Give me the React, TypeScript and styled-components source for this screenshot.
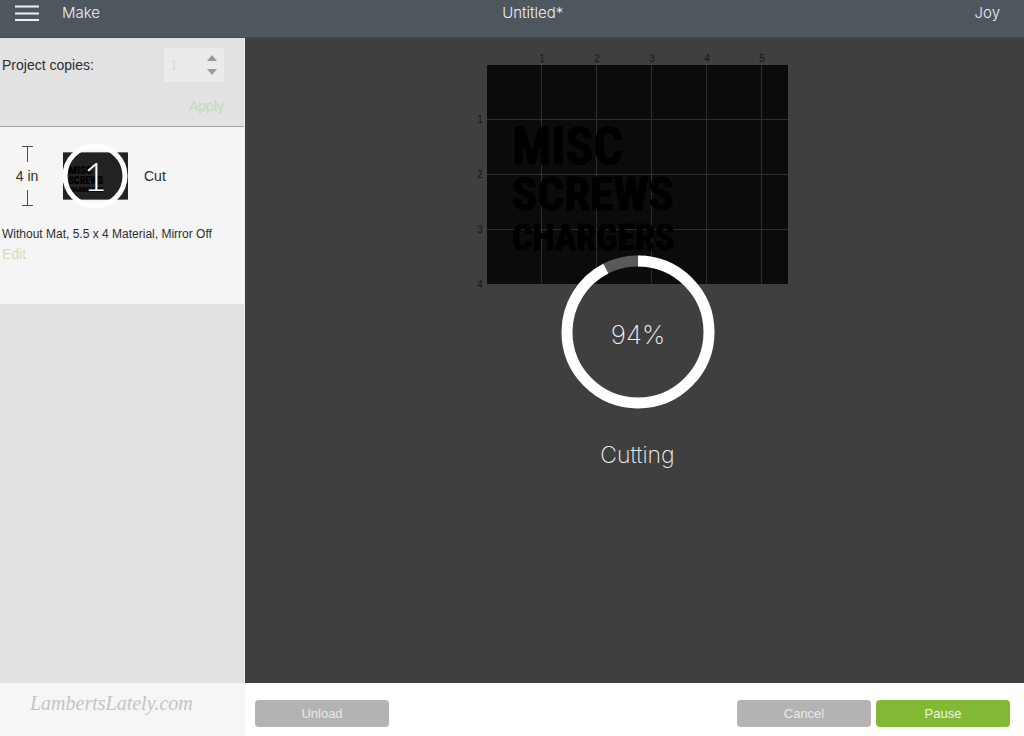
import React from "react";
import styled, { createGlobalStyle } from "styled-components";

const light = `"Inter", "Roboto", sans-serif`;
const regular = `"Liberation Sans", Arial, sans-serif`;

const GlobalStyle = createGlobalStyle`
  * { box-sizing: border-box; }
  body {
    margin: 0;
    background: #ffffff;
    color: #2d2d2d;
    font-family: ${regular};
    font-size: 14px;
    line-height: 20px;
  }
  button, input { font: inherit; }
`;

const Page = styled.div`
  display: grid;
  grid-template-rows: auto 1fr;
  min-height: 100vh;
`;

const Header = styled.header`
  display: grid;
  grid-template-columns: 76px 1fr auto;
  align-items: start;
  height: 38px;
  padding: 3px 24px 0 15px;
  background: #4e565e;
  border-bottom: 1px solid #454b51;
  color: #eef1f3;
  font-family: ${light};
  font-size: 15px;
  font-weight: 300;
  line-height: 20px;
`;

const HeaderLeft = styled.div`
  display: flex;
  gap: 23px;
`;

const MenuButton = styled.button`
  display: flex;
  padding: 2px 0 0;
  border: 0;
  background: none;
  color: inherit;
`;

const Title = styled.h1`
  margin: 0;
  font: inherit;
  text-align: center;
`;

const Body = styled.div`
  display: grid;
  grid-template-columns: 245px 1fr;
  grid-template-rows: 1fr auto;
`;

const Sidebar = styled.aside`
  background: #e2e2e2;
  border-right: 1px solid #f0f0f0;
`;

const Copies = styled.form`
  display: grid;
  grid-template-rows: auto 1fr;
  gap: 14px;
  height: 89px;
  padding: 10px 20px 0 2px;
  border-bottom: 1px solid #a2a2a2;
`;

const CopiesRow = styled.div`
  display: flex;
  align-items: center;
  justify-content: space-between;
  height: 34px;
`;

const Stepper = styled.div`
  display: flex;
  width: 60px;
  height: 34px;
  background: #ebebeb;
`;

const CopiesInput = styled.input`
  width: 36px;
  padding: 0 0 0 6px;
  border: 0;
  background: transparent;
  color: #d9d9d9;
  appearance: textfield;
  &::-webkit-inner-spin-button { appearance: none; }
`;

const Steps = styled.div`
  display: flex;
  flex: 1;
  flex-direction: column;
  align-items: center;
  justify-content: center;
  gap: 8px;
`;

const Step = styled.button`
  display: flex;
  padding: 0;
  border: 0;
  background: none;
`;

const TextButton = styled.button`
  justify-self: end;
  align-self: start;
  padding: 0;
  border: 0;
  background: none;
  color: #c6dbb0;
  line-height: 20px;
`;

const MatCard = styled.section`
  height: 177px;
  padding: 15px 2px 0;
  background: #f5f5f5;
`;

const MatRow = styled.div`
  display: grid;
  grid-template-columns: 50px 74px auto;
  column-gap: 9px;
  align-items: center;
  height: 68px;
`;

const Size = styled.div`
  display: grid;
  justify-items: center;
  gap: 4px;
`;

const Thumb = styled.svg`
  display: block;
`;

const Details = styled.p`
  margin: 14px 0 0;
  font-size: 12px;
  line-height: 20px;
  white-space: nowrap;
`;

const EditLink = styled.a`
  color: #cfe0ba;
  text-decoration: none;
`;

const Stage = styled.main`
  position: relative;
  display: flex;
  flex-direction: column;
  align-items: center;
  min-height: 500px;
  padding: 12px 6px 0 0;
  background: #3f3f3f;
`;

const Overlay = styled.div`
  position: absolute;
  inset: 0;
  display: flex;
  flex-direction: column;
  align-items: center;
  justify-content: center;
  gap: 31px;
  padding: 3px 0 0 6px;
  color: #f2f2f2;
  font-family: ${light};
  font-size: 23px;
  font-weight: 200;
  line-height: 30px;
`;

const Brand = styled.div`
  padding: 5px 0 0 30px;
  background: #f6f6f6;
  color: #c4c4c4;
  font-family: "Liberation Serif", serif;
  font-size: 20px;
  font-style: italic;
  line-height: 30px;
`;

const Footer = styled.footer`
  display: flex;
  gap: 5px;
  padding: 17px 14px 9px 10px;
  background: #ffffff;
`;

const Spacer = styled.div`
  flex: 1;
`;

const ActionButton = styled.button<{ $primary?: boolean }>`
  width: 134px;
  height: 27px;
  padding: 0;
  border: 0;
  border-radius: 4px;
  background: ${(p) => (p.$primary ? "#83b935" : "#b3b3b3")};
  color: ${(p) => (p.$primary ? "#eff6e4" : "#e9e9e9")};
  font-size: 13px;
`;

const INCH = 55;
const columns = [1, 2, 3, 4, 5];
const rows = [1, 2, 3, 4];
const words = [
  { text: "MISC", baseline: 114, size: 52 },
  { text: "SCREWS", baseline: 160, size: 47 },
  { text: "CHARGERS", baseline: 200, size: 36 },
];

function MatArt({ surface = "#0b0b0b" }: { surface?: string }) {
  return (
    <>
      <rect x="12" y="15" width="301" height="219" fill={surface} />
      <g stroke="#2e2e2e" strokeWidth="1">
        {columns.map((n) => (
          <path key={n} d={`M${11.5 + n * INCH} 15V234`} />
        ))}
        {rows.slice(0, 3).map((n) => (
          <path key={n} d={`M12 ${14.5 + n * INCH}H313`} />
        ))}
      </g>
      <g
        fill="#000000"
        stroke="#000000"
        strokeWidth="1"
        fontFamily="'Roboto Condensed', 'Open Sans Condensed', 'Noto Sans Condensed', Roboto, sans-serif"
        fontWeight="700"
      >
        {words.map((w) => (
          <text key={w.text} x="37" y={w.baseline} fontSize={w.size}>
            {w.text}
          </text>
        ))}
      </g>
    </>
  );
}

function Mat() {
  return (
    <svg width="313" height="242" viewBox="0 0 313 242" role="img" aria-label="Material preview">
      <MatArt />
      <g fill="#161616" fontFamily="Liberation Sans, sans-serif" fontSize="10" textAnchor="middle">
        {columns.map((n) => (
          <text key={n} x={12 + n * INCH} y="12">{n}</text>
        ))}
        {rows.map((n) => (
          <text key={n} x="5" y={18 + n * INCH}>{n}</text>
        ))}
      </g>
    </svg>
  );
}

function MatThumb() {
  return (
    <Thumb width="68" height="68" viewBox="0 0 68 68" role="img" aria-label="Mat 1">
      <svg x="2" y="10" width="65" height="48" viewBox="12 15 301 219">
        <MatArt surface="#222222" />
      </svg>
      <circle cx="34" cy="34" r="30" fill="none" stroke="#ffffff" strokeWidth="5" />
      <text
        x="34"
        y="49"
        fill="#ffffff"
        fontFamily="Lato, sans-serif"
        fontWeight="300"
        fontSize="40"
        textAnchor="middle"
      >
        1
      </text>
    </Thumb>
  );
}

function Progress({ value }: { value: number }) {
  return (
    <svg width="154" height="154" viewBox="0 0 154 154" role="progressbar" aria-valuenow={value} aria-label="Cutting">
      <g fill="none" strokeWidth="11">
        <circle cx="77" cy="77" r="71" stroke="#595959" />
        <circle
          cx="77"
          cy="77"
          r="71"
          stroke="#ffffff"
          pathLength="100"
          strokeDasharray="92.5 7.5"
          transform="rotate(-90 77 77)"
        />
      </g>
      <text
        x="77"
        y="89"
        fill="#f2f2f2"
        fontFamily="Inter, sans-serif"
        fontWeight="200"
        fontSize="26"
        textAnchor="middle"
      >
        {value}%
      </text>
    </svg>
  );
}

function Arrow({ down }: { down?: boolean }) {
  return (
    <svg width="10" height="6" viewBox="0 0 10 6" aria-hidden="true">
      <path d={down ? "M0 0H10L5 6Z" : "M0 6L5 0L10 6Z"} fill="#999999" />
    </svg>
  );
}

function Bracket({ bottom }: { bottom?: boolean }) {
  return (
    <svg width="11" height="16" viewBox="0 0 11 16" aria-hidden="true">
      <path d={bottom ? "M5.5 0V15.5M0 15.5H11" : "M0 .5H11M5.5 .5V16"} fill="none" stroke="#4a4a4a" />
    </svg>
  );
}

export default function App() {
  return (
    <>
      <GlobalStyle />
      <Page>
        <Header>
          <HeaderLeft>
            <MenuButton type="button" aria-label="Menu">
              <svg width="24" height="16" viewBox="0 0 24 16" aria-hidden="true">
                <path d="M0 1.5H24M0 8.5H24M0 15H24" stroke="currentColor" strokeWidth="2" />
              </svg>
            </MenuButton>
            <span>Make</span>
          </HeaderLeft>
          <Title>Untitled*</Title>
          <span>Joy</span>
        </Header>
        <Body>
          <Sidebar>
            <Copies>
              <CopiesRow>
                <label htmlFor="copies">Project copies:</label>
                <Stepper>
                  <CopiesInput id="copies" type="number" defaultValue={1} disabled />
                  <Steps>
                    <Step type="button" aria-label="More copies"><Arrow /></Step>
                    <Step type="button" aria-label="Fewer copies"><Arrow down /></Step>
                  </Steps>
                </Stepper>
              </CopiesRow>
              <TextButton type="button">Apply</TextButton>
            </Copies>
            <MatCard>
              <MatRow>
                <Size>
                  <Bracket />
                  <span>4 in</span>
                  <Bracket bottom />
                </Size>
                <MatThumb />
                <span>Cut</span>
              </MatRow>
              <Details>Without Mat, 5.5 x 4 Material, Mirror Off</Details>
              <EditLink href="#edit">Edit</EditLink>
            </MatCard>
          </Sidebar>
          <Stage>
            <Mat />
            <Overlay>
              <Progress value={94} />
              <span>Cutting</span>
            </Overlay>
          </Stage>
          <Brand>LambertsLately.com</Brand>
          <Footer>
            <ActionButton type="button">Unload</ActionButton>
            <Spacer />
            <ActionButton type="button">Cancel</ActionButton>
            <ActionButton type="button" $primary>Pause</ActionButton>
          </Footer>
        </Body>
      </Page>
    </>
  );
}
